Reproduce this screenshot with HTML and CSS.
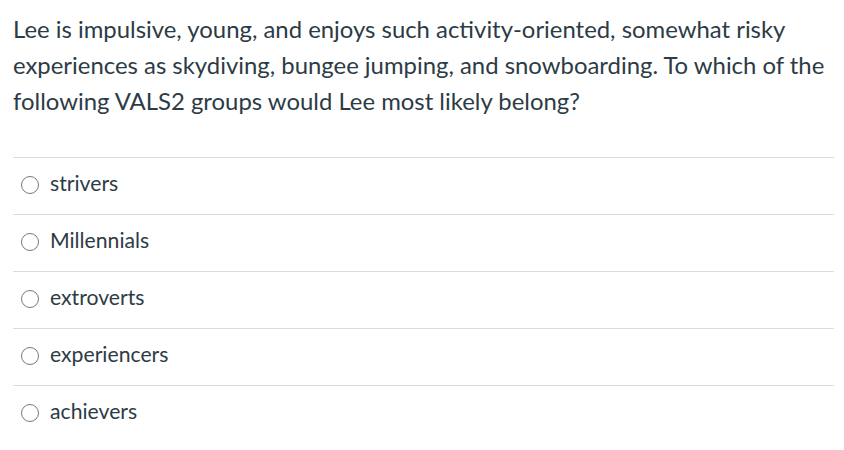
FILE: index.html
```html
<!DOCTYPE html>
<html>
<head>
<meta charset="utf-8">
<link rel="stylesheet" href="styles.css">
</head>
<body>
<div class="question">
  <p class="text">Lee is impulsive, young, and enjoys such activity-oriented, somewhat risky experiences as skydiving, bungee jumping, and snowboarding. To which of the following VALS2 groups would Lee most likely belong?</p>
  <div class="answers">
    <label class="answer"><span class="radio"></span><span class="label">strivers</span></label>
    <label class="answer"><span class="radio"></span><span class="label">Millennials</span></label>
    <label class="answer"><span class="radio"></span><span class="label">extroverts</span></label>
    <label class="answer"><span class="radio"></span><span class="label">experiencers</span></label>
    <label class="answer"><span class="radio"></span><span class="label">achievers</span></label>
  </div>
</div>
</body>
</html>
```

FILE: styles.css
```css
html, body {
  margin: 0;
  padding: 0;
  background: #fff;
}
body {
  font-family: Lato, "Liberation Sans", sans-serif;
  color: #2d3b45;
}
.question {
  padding: 11px 10px 0 13px;
}
.text {
  margin: 0;
  margin-right: -6px;
  font-size: 23.9px;
  line-height: 36px;
}
.answers {
  margin-top: 38px;
}
.answer {
  display: flex;
  align-items: center;
  height: 56px;
  border-top: 1px solid #dcdcdc;
  padding-left: 8px;
  font-size: 21.2px;
}
.radio {
  width: 16px;
  height: 16px;
  border: 1px solid #7a7a7a;
  border-radius: 50%;
  box-sizing: content-box;
  margin-right: 11px;
  margin-top: -2px;
}
.label {
  line-height: 24px;
  margin-top: -6px;
}
```
